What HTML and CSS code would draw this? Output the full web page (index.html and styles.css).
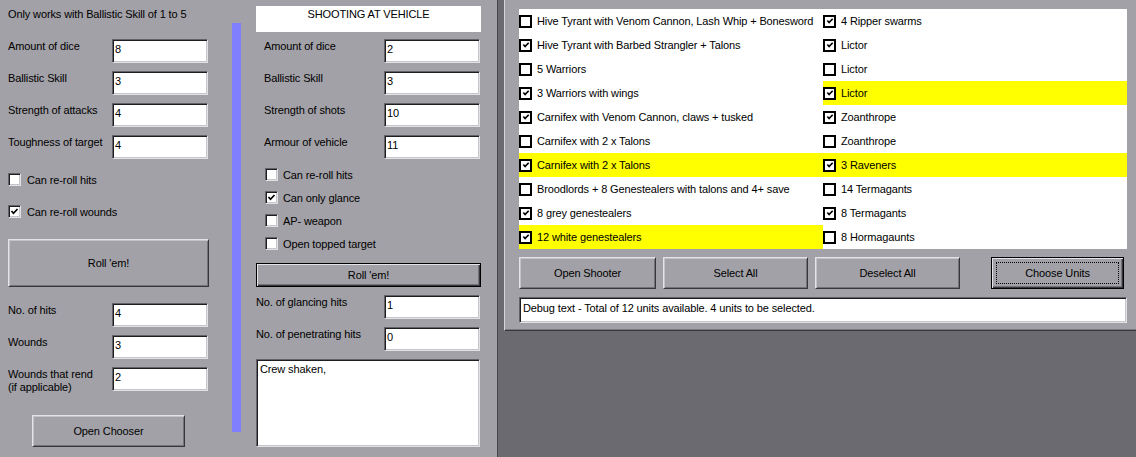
FILE: index.html
```html
<!DOCTYPE html>
<html>
<head>
	<meta charset="UTF-8">
	<title>Shooting Calculator</title>
	<link rel="stylesheet" href="styles.css">
</head>
<body>
	<div class="shooter">
		<div class="col-a">
			<div class="note">Only works with Ballistic Skill of 1 to 5</div>
			<div class="fields">
				<div class="field"><label>Amount of dice</label><input type="text" value="8"></div>
				<div class="field"><label>Ballistic Skill</label><input type="text" value="3"></div>
				<div class="field"><label>Strength of attacks</label><input type="text" value="4"></div>
				<div class="field"><label>Toughness of target</label><input type="text" value="4"></div>
			</div>
			<div class="checks">
				<div class="check"><span class="cb"></span>Can re-roll hits</div>
				<div class="check"><span class="cb"><svg viewBox="0 0 9 9"><polyline points="1.5,4 3.5,6.3 7.5,2"/></svg></span>Can re-roll wounds</div>
			</div>
			<button class="btn roll-big">Roll 'em!</button>
			<div class="fields results">
				<div class="field"><label>No. of hits</label><input type="text" value="4"></div>
				<div class="field"><label>Wounds</label><input type="text" value="3"></div>
				<div class="field"><label>Wounds that rend<br>(if applicable)</label><input type="text" value="2"></div>
			</div>
			<button class="btn open-chooser">Open Chooser</button>
		</div>

		<div class="bar"></div>

		<div class="col-b">
			<div class="heading">SHOOTING AT VEHICLE</div>
			<div class="fields vfields">
				<div class="field"><label>Amount of dice</label><input type="text" value="2"></div>
				<div class="field"><label>Ballistic Skill</label><input type="text" value="3"></div>
				<div class="field"><label>Strength of shots</label><input type="text" value="10"></div>
				<div class="field"><label>Armour of vehicle</label><input type="text" value="11"></div>
			</div>
			<div class="checks vchecks">
				<div class="check"><span class="cb"></span>Can re-roll hits</div>
				<div class="check"><span class="cb"><svg viewBox="0 0 9 9"><polyline points="1.5,4 3.5,6.3 7.5,2"/></svg></span>Can only glance</div>
				<div class="check"><span class="cb"></span>AP- weapon</div>
				<div class="check"><span class="cb"></span>Open topped target</div>
			</div>
			<button class="btn default roll-small">Roll 'em!</button>
			<div class="fields hits">
				<div class="field"><label>No. of glancing hits</label><input type="text" value="1"></div>
				<div class="field"><label>No. of penetrating hits</label><input type="text" value="0"></div>
			</div>
			<textarea class="outcome">Crew shaken,</textarea>
		</div>
	</div>

	<div class="chooser">
		<div class="units">
			<div class="unit"><span class="box"></span>Hive Tyrant with Venom Cannon, Lash Whip + Bonesword</div>
			<div class="unit"><span class="box"><svg viewBox="0 0 9 9"><polyline points="1.5,4 3.5,6.3 7.5,2"/></svg></span>Hive Tyrant with Barbed Strangler + Talons</div>
			<div class="unit"><span class="box"></span>5 Warriors</div>
			<div class="unit"><span class="box"><svg viewBox="0 0 9 9"><polyline points="1.5,4 3.5,6.3 7.5,2"/></svg></span>3 Warriors with wings</div>
			<div class="unit"><span class="box"><svg viewBox="0 0 9 9"><polyline points="1.5,4 3.5,6.3 7.5,2"/></svg></span>Carnifex with Venom Cannon, claws + tusked</div>
			<div class="unit"><span class="box"></span>Carnifex with 2 x Talons</div>
			<div class="unit picked"><span class="box"><svg viewBox="0 0 9 9"><polyline points="1.5,4 3.5,6.3 7.5,2"/></svg></span>Carnifex with 2 x Talons</div>
			<div class="unit"><span class="box"></span>Broodlords + 8 Genestealers with talons and 4+ save</div>
			<div class="unit"><span class="box"><svg viewBox="0 0 9 9"><polyline points="1.5,4 3.5,6.3 7.5,2"/></svg></span>8 grey genestealers</div>
			<div class="unit picked"><span class="box"><svg viewBox="0 0 9 9"><polyline points="1.5,4 3.5,6.3 7.5,2"/></svg></span>12 white genestealers</div>

			<div class="unit"><span class="box"><svg viewBox="0 0 9 9"><polyline points="1.5,4 3.5,6.3 7.5,2"/></svg></span>4 Ripper swarms</div>
			<div class="unit"><span class="box"><svg viewBox="0 0 9 9"><polyline points="1.5,4 3.5,6.3 7.5,2"/></svg></span>Lictor</div>
			<div class="unit"><span class="box"></span>Lictor</div>
			<div class="unit picked"><span class="box"><svg viewBox="0 0 9 9"><polyline points="1.5,4 3.5,6.3 7.5,2"/></svg></span>Lictor</div>
			<div class="unit"><span class="box"><svg viewBox="0 0 9 9"><polyline points="1.5,4 3.5,6.3 7.5,2"/></svg></span>Zoanthrope</div>
			<div class="unit"><span class="box"></span>Zoanthrope</div>
			<div class="unit picked"><span class="box"><svg viewBox="0 0 9 9"><polyline points="1.5,4 3.5,6.3 7.5,2"/></svg></span>3 Raveners</div>
			<div class="unit"><span class="box"></span>14 Termagants</div>
			<div class="unit"><span class="box"><svg viewBox="0 0 9 9"><polyline points="1.5,4 3.5,6.3 7.5,2"/></svg></span>8 Termagants</div>
			<div class="unit"><span class="box"></span>8 Hormagaunts</div>
		</div>
		<div class="actions">
			<button class="btn open-shooter">Open Shooter</button>
			<button class="btn select-all">Select All</button>
			<button class="btn deselect-all">Deselect All</button>
			<button class="btn default choose"><span class="focus">Choose Units</span></button>
		</div>
		<div class="debug">Debug text - Total of 12 units available. 4 units to be selected.</div>
	</div>
</body>
</html>
```

FILE: styles.css
```css
body {
	margin: 0;
	width: 1136px;
	height: 457px;
	overflow: hidden;
	display: flex;
	align-items: flex-start;
	background-color: #6b6a70;
	font-family: "Liberation Sans", Arial, sans-serif;
	font-size: 11px;
	letter-spacing: -0.12px;
	color: #000;
}
input, textarea, button {
	font-family: inherit;
	font-size: 11px;
	letter-spacing: inherit;
	color: #000;
}

/* left window: the shooter */
.shooter {
	flex: none;
	display: flex;
	width: 498px;
	height: 457px;
	box-sizing: border-box;
	background-color: #a2a1a7;
	border-right: 1px solid #46454b;
}
.col-a {
	width: 232px;
	box-sizing: border-box;
	padding: 7px 0 0 8px;
}
.note {
	height: 14px;
	line-height: 14px;
}
.fields {
	display: flex;
	flex-direction: column;
	gap: 8px;
	margin-top: 18px;
}
.field {
	display: flex;
	height: 24px;
}
.field label {
	width: 104px;
	flex: none;
	line-height: 13px;
	padding-top: 1px;
}
.field input, .outcome {
	width: 96px;
	height: 24px;
	box-sizing: border-box;
	margin: 0;
	padding: 0 2px 5px;
	outline: none;
	background: #fff;
	border: 1px solid;
	border-color: #636268 #e2e2e6 #e2e2e6 #636268;
	box-shadow: inset 1px 1px 0 #1e1e22, inset -1px -1px 0 #c6c5ca;
}
.checks {
	display: flex;
	flex-direction: column;
	gap: 19px;
	margin-top: 14px;
}
.check {
	display: flex;
	align-items: center;
	gap: 6px;
	height: 13px;
}
.cb {
	width: 13px;
	height: 13px;
	box-sizing: border-box;
	background: #fff;
	border: 1px solid;
	border-color: #636268 #e2e2e6 #e2e2e6 #636268;
	box-shadow: inset 1px 1px 0 #1e1e22, inset -1px -1px 0 #c6c5ca;
	display: flex;
	align-items: center;
	justify-content: center;
}
.cb svg, .box svg {
	width: 9px;
	height: 9px;
	fill: none;
	stroke: #000;
	stroke-width: 1.7;
}
.btn {
	display: block;
	padding: 0;
	background-color: #a2a1a7;
	border: 1px solid;
	border-color: #e4e4e8 #37363b #37363b #e4e4e8;
	box-shadow: inset 1px 1px 0 #c3c2c7, inset -1px -1px 0 #747379;
}
.btn.default {
	border: 1px solid #000;
	box-shadow: inset 1px 1px 0 #e4e4e8, inset -1px -1px 0 #37363b, inset -2px -2px 0 #747379;
}
.roll-big {
	width: 201px;
	height: 48px;
	margin-top: 21px;
}
.results {
	margin-top: 16px;
}
.open-chooser {
	width: 153px;
	height: 32px;
	margin: 24px 0 0 24px;
}
.bar {
	width: 9px;
	height: 409px;
	margin-top: 23px;
	background-color: #8080ff;
}

.col-b {
	width: 225px;
	margin-left: 15px;
	padding-top: 6px;
}
.heading {
	height: 26px;
	box-sizing: border-box;
	padding-top: 1px;
	line-height: 14px;
	text-align: center;
	background: #fff;
}
.vfields {
	margin-top: 7px;
}
.vfields label {
	width: 120px;
	padding-left: 8px;
}
.vchecks {
	gap: 10px;
	margin-top: 9px;
	padding-left: 9px;
}
.vchecks .check {
	gap: 5px;
}
.roll-small {
	width: 225px;
	height: 24px;
	margin-top: 13px;
}
.hits {
	margin-top: 8px;
}
.hits label {
	width: 128px;
}
.outcome {
	display: block;
	width: 224px;
	height: 88px;
	margin-top: 8px;
	padding: 3px 3px;
	resize: none;
	line-height: 13px;
}

/* right window: the unit chooser */
.chooser {
	flex: none;
	width: 640px;
	height: 331px;
	box-sizing: border-box;
	margin-left: 6px;
	padding: 9px 0 0 14px;
	background-color: #a2a1a7;
	border-left: 1px solid #d6d6da;
	border-bottom: 1px solid #38373c;
	box-shadow: inset 0 -1px 0 #7a797f;
}
.units {
	width: 608px;
	height: 240px;
	display: grid;
	grid-template-columns: 304px 304px;
	grid-template-rows: repeat(10, 24px);
	grid-auto-flow: column;
	background: #fff;
}
.unit {
	display: flex;
	align-items: center;
	gap: 5px;
}
.unit.picked {
	background-color: #ffff00;
}
.box {
	width: 13px;
	height: 13px;
	box-sizing: border-box;
	border: 2px solid #000;
	background: #fff;
	display: flex;
	align-items: center;
	justify-content: center;
}
.box svg {
	width: 8px;
	height: 8px;
	stroke-width: 1.9;
}
.actions {
	display: flex;
	gap: 7px;
	width: 608px;
	margin-top: 8px;
}
.actions .btn {
	height: 32px;
}
.open-shooter {
	width: 137px;
}
.select-all {
	width: 145px;
}
.deselect-all {
	width: 145px;
}
.choose {
	width: 133px;
	margin-left: auto;
	margin-right: 3px;
	padding: 4px !important;
}
.focus {
	display: flex;
	align-items: center;
	justify-content: center;
	height: 100%;
	border: 1px dotted #000;
	box-sizing: border-box;
}
.debug {
	width: 608px;
	height: 26px;
	box-sizing: border-box;
	margin-top: 8px;
	padding: 3px 3px 0;
	line-height: 14px;
	background: #fff;
	border: 1px solid;
	border-color: #636268 #e2e2e6 #e2e2e6 #636268;
	box-shadow: inset 1px 1px 0 #1e1e22, inset -1px -1px 0 #c6c5ca;
}
```
